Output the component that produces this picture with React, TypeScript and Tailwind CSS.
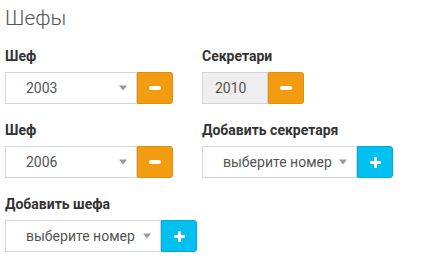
import React from 'react';

const font = { fontFamily: 'Roboto, "Open Sans", sans-serif' };

const Caret = () => (
  <span className="absolute right-[9px] top-1/2 -translate-y-1/2 w-0 h-0 border-l-[4px] border-r-[4px] border-t-[5px] border-l-transparent border-r-transparent border-t-[#999]" />
);

const MinusBtn = () => (
  <button className="w-[36px] h-[32px] bg-[#f39c12] border border-[#e08e0b] rounded-r-[3px] flex items-center justify-center">
    <span className="block w-[12px] h-[4px] bg-white rounded-[2px]" />
  </button>
);

const PlusBtn = () => (
  <button className="w-[36px] h-[32px] bg-[#00c0ef] border border-[#00acd6] rounded-r-[3px] flex items-center justify-center relative">
    <span className="absolute w-[11px] h-[3px] bg-white rounded-[1px]" />
    <span className="absolute w-[3px] h-[11px] bg-white rounded-[1px]" />
  </button>
);

const SelectBox = ({ value, width }: { value: string; width: string }) => (
  <div className={`relative h-[32px] ${width} border border-[#d2d6de] bg-white pl-[20px] flex items-center text-[14px] text-[#555]`}>
    {value}
    <Caret />
  </div>
);

const Field = ({ label, children }: { label: string; children: React.ReactNode }) => (
  <div>
    <div className="text-[14px] font-bold text-[#333] leading-[20px] mb-[6px]">{label}</div>
    <div className="flex">{children}</div>
  </div>
);

export default function App() {
  return (
    <div className="w-[425px] h-[266px] bg-white px-[5px] pt-[4px]" style={font}>
      <h3 className="text-[21px] font-light text-[#555] leading-[28px] mb-[14px]">Шефы</h3>
      <div className="grid grid-cols-[197px_1fr] gap-y-[16px]">
        <Field label="Шеф">
          <SelectBox value="2003" width="w-[132px]" />
          <MinusBtn />
        </Field>
        <Field label="Секретари">
          <div className="h-[32px] w-[66px] border border-[#d2d6de] bg-[#eee] pl-[12px] flex items-center text-[14px] text-[#555]">
            2010
          </div>
          <MinusBtn />
        </Field>
        <Field label="Шеф">
          <SelectBox value="2006" width="w-[132px]" />
          <MinusBtn />
        </Field>
        <Field label="Добавить секретаря">
          <SelectBox value="выберите номер" width="w-[155px]" />
          <PlusBtn />
        </Field>
        <Field label="Добавить шефа">
          <SelectBox value="выберите номер" width="w-[156px]" />
          <PlusBtn />
        </Field>
      </div>
    </div>
  );
}
